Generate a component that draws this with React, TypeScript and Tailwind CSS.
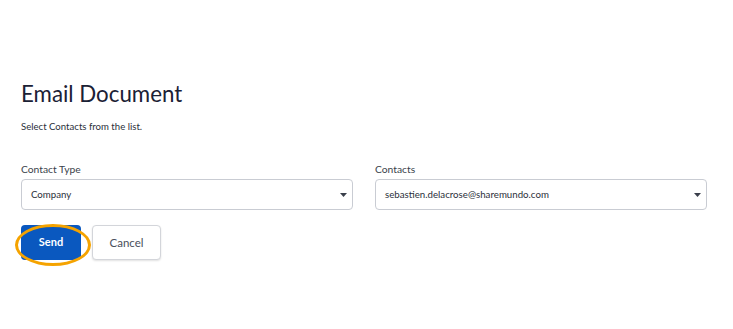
import React from "react";

function Caret() {
  return (
    <svg width="7" height="4" viewBox="0 0 7 4" className="shrink-0">
      <path d="M0 0 H7 L3.5 4 Z" fill="#3a3f4b" />
    </svg>
  );
}

function Select({ value }: { value: string }) {
  return (
    <div className="flex h-[31px] items-center justify-between rounded-[4px] border border-[#c9ccd3] bg-white pl-[9px] pr-[5px] text-[9.7px] text-[#2b2f3a]">
      <span>{value}</span>
      <Caret />
    </div>
  );
}

export default function App() {
  return (
    <div
      className="h-[329px] w-[733px] bg-white pl-[21px] pr-[26px] pt-[81px]"
      style={{ fontFamily: "Lato, 'Noto Sans', sans-serif" }}
    >
      <h1 className="text-[22.3px] leading-[26px] text-[#1b2135]">Email Document</h1>
      <p className="mt-[14px] text-[9.6px] leading-[12px] text-[#2b2f3a]">Select Contacts from the list.</p>
      <div className="mt-[30px] grid grid-cols-2 gap-x-[22px]">
        <div>
          <div className="mb-[4px] text-[10.3px] leading-[12px] text-[#3a3f4b]">Contact Type</div>
          <Select value="Company" />
        </div>
        <div>
          <div className="mb-[4px] text-[10.3px] leading-[12px] text-[#3a3f4b]">Contacts</div>
          <Select value="sebastien.delacrose@sharemundo.com" />
        </div>
      </div>
      <div className="mt-[15px] flex gap-[11px]">
        <div className="relative">
          <button className="h-[35px] w-[60px] rounded-[4px] bg-[#0a58bf] text-[11px] font-bold text-white">
            Send
          </button>
          <div className="pointer-events-none absolute left-[-6px] top-[-1px] h-[42px] w-[76px] rounded-[50%] border-[3px] border-[#f5a300]" />
        </div>
        <button className="h-[35px] w-[69px] rounded-[4px] border border-[#d3d5da] bg-white text-[11.5px] text-[#4a4f5c] shadow-[0_1px_2px_rgba(0,0,0,0.12)]">
          Cancel
        </button>
      </div>
    </div>
  );
}
